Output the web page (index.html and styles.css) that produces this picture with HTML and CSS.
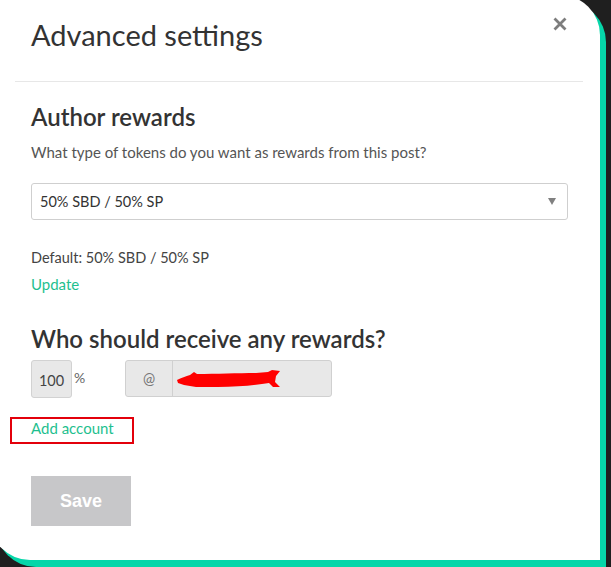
FILE: index.html
```html
<!DOCTYPE html>
<html lang="en">
<head>
<meta charset="utf-8">
<title>Advanced settings</title>
<link rel="stylesheet" href="styles.css">
</head>
<body>
<div class="modal">
  <div class="header">
    <h1 class="title">Advanced settings</h1>
    <button class="close" aria-label="Close">
      <svg width="14" height="14" viewBox="0 0 14 14"><path d="M1.5 1.5 L12.5 12.5 M12.5 1.5 L1.5 12.5" stroke="#7d7d7d" stroke-width="2.8" stroke-linecap="butt"/></svg>
    </button>
  </div>
  <hr class="divider">
  <div class="body">
    <h2 class="section-title">Author rewards</h2>
    <p class="hint">What type of tokens do you want as rewards from this post?</p>
    <div class="select">
      <span class="select-value">50% SBD / 50% SP</span>
      <svg class="caret" width="8" height="7" viewBox="0 0 8 7"><path d="M0 0 H8 L4 7 Z" fill="#808080"/></svg>
    </div>
    <p class="default">Default: 50% SBD / 50% SP</p>
    <a class="link update">Update</a>
    <h2 class="section-title who">Who should receive any rewards?</h2>
    <div class="beneficiary-row">
      <div class="pct-box">100</div>
      <span class="pct">%</span>
      <div class="account">
        <span class="at">@</span>
        <span class="account-input">
          <svg width="106" height="20" viewBox="0 0 106 20">
            <path d="M1 10 C5 8 10 6 14 5 L18 2 L21 4 C40 4 62 3 80 3 L92 2 L96 0 L104 1 L100 6 L99 12 L104 17 L97 17 L93 13 C80 15 62 17 42 17 L20 17 L8 15 L2 13 Z" fill="#ff0000"/>
          </svg>
        </span>
      </div>
    </div>
    <div class="add-wrap"><a class="link">Add account</a></div>
    <button class="save">Save</button>
  </div>
</div>
</body>
</html>
```

FILE: styles.css
```css
html, body {
  margin: 0;
  padding: 0;
}
body {
  background: #1f1f1f;
  width: 611px;
  height: 567px;
  overflow: hidden;
  font-family: "Lato", "Open Sans", sans-serif;
  color: #333;
}
.modal {
  box-sizing: border-box;
  margin: -5px 0 0 -10px;
  width: 610px;
  height: 565px;
  background: #fff;
  border-radius: 0 40px 0 40px;
  box-shadow: 6px 7px 0 #06d6a9;
  padding-top: 22px;
}
.header {
  display: flex;
  justify-content: space-between;
  align-items: flex-start;
  padding: 0 33px 0 41px;
}
.title {
  margin: 0;
  font-size: 29px;
  font-weight: 400;
  line-height: 35px;
  color: #333;
}
.close {
  border: 0;
  background: none;
  padding: 0;
  width: 14px;
  height: 14px;
  display: block;
  cursor: pointer;
}
.close svg { display: block; }
.divider {
  border: 0;
  border-top: 1px solid #e7e7e7;
  margin: 29px 0 0 25px;
  width: 568px;
  height: 0;
}
.body {
  padding: 0 0 0 41px;
}
.section-title {
  margin: 20px 0 0;
  font-size: 24px;
  font-weight: 600;
  line-height: 29px;
  color: #333;
}
.hint {
  margin: 11px 0 0;
  font-size: 15px;
  line-height: 20px;
  color: #555;
}
.select {
  box-sizing: border-box;
  margin-top: 21px;
  width: 537px;
  height: 37px;
  border: 1px solid #cfcfcf;
  border-radius: 3px;
  display: flex;
  align-items: center;
  justify-content: space-between;
  padding: 0 11px 0 8px;
  font-size: 14.5px;
  color: #333;
}
.caret { display: block; }
.default {
  margin: 28px 0 0;
  font-size: 14.5px;
  line-height: 20px;
  color: #444;
}
.link {
  color: #1fbf8f;
  font-size: 15px;
  line-height: 20px;
  text-decoration: none;
  cursor: pointer;
}
.update {
  display: block;
  margin-top: 6px;
}
.who {
  margin-top: 30px;
}
.beneficiary-row {
  margin-top: 7px;
  display: flex;
  align-items: flex-start;
}
.pct-box {
  box-sizing: border-box;
  width: 41px;
  height: 38px;
  background: #e8e8e8;
  border: 1px solid #d2d2d2;
  border-radius: 3px;
  font-size: 14.5px;
  line-height: 36px;
  text-align: center;
  color: #444;
  padding-top: 2px;
}
.pct {
  font-size: 14px;
  line-height: 16px;
  color: #666;
  margin: 10px 0 0 2px;
  width: 51px;
}
.account {
  box-sizing: border-box;
  display: flex;
  width: 207px;
  height: 37px;
  background: #e8e8e8;
  border: 1px solid #d0d0d0;
  border-radius: 3px;
}
.at {
  width: 46px;
  border-right: 1px solid #d0d0d0;
  text-align: center;
  font-size: 14.5px;
  line-height: 35px;
  color: #777;
}
.account-input {
  flex: 1;
  display: flex;
  align-items: center;
  padding-left: 3px;
}
.account-input svg { display: block; margin-top: 3px; }
.add-wrap {
  box-sizing: border-box;
  margin: 19px 0 0 -21px;
  width: 124px;
  height: 27px;
  border: 2px solid #e3000b;
  padding: 0 0 0 19px;
  line-height: 18px;
}
.add-wrap .link { line-height: 18px; }
.save {
  display: block;
  margin-top: 32px;
  width: 100px;
  height: 50px;
  border: 0;
  background: #c7c7c9;
  color: #fff;
  font-family: "Liberation Sans", Arial, sans-serif;
  font-weight: 700;
  font-size: 18px;
  padding: 0;
  cursor: pointer;
}
```
